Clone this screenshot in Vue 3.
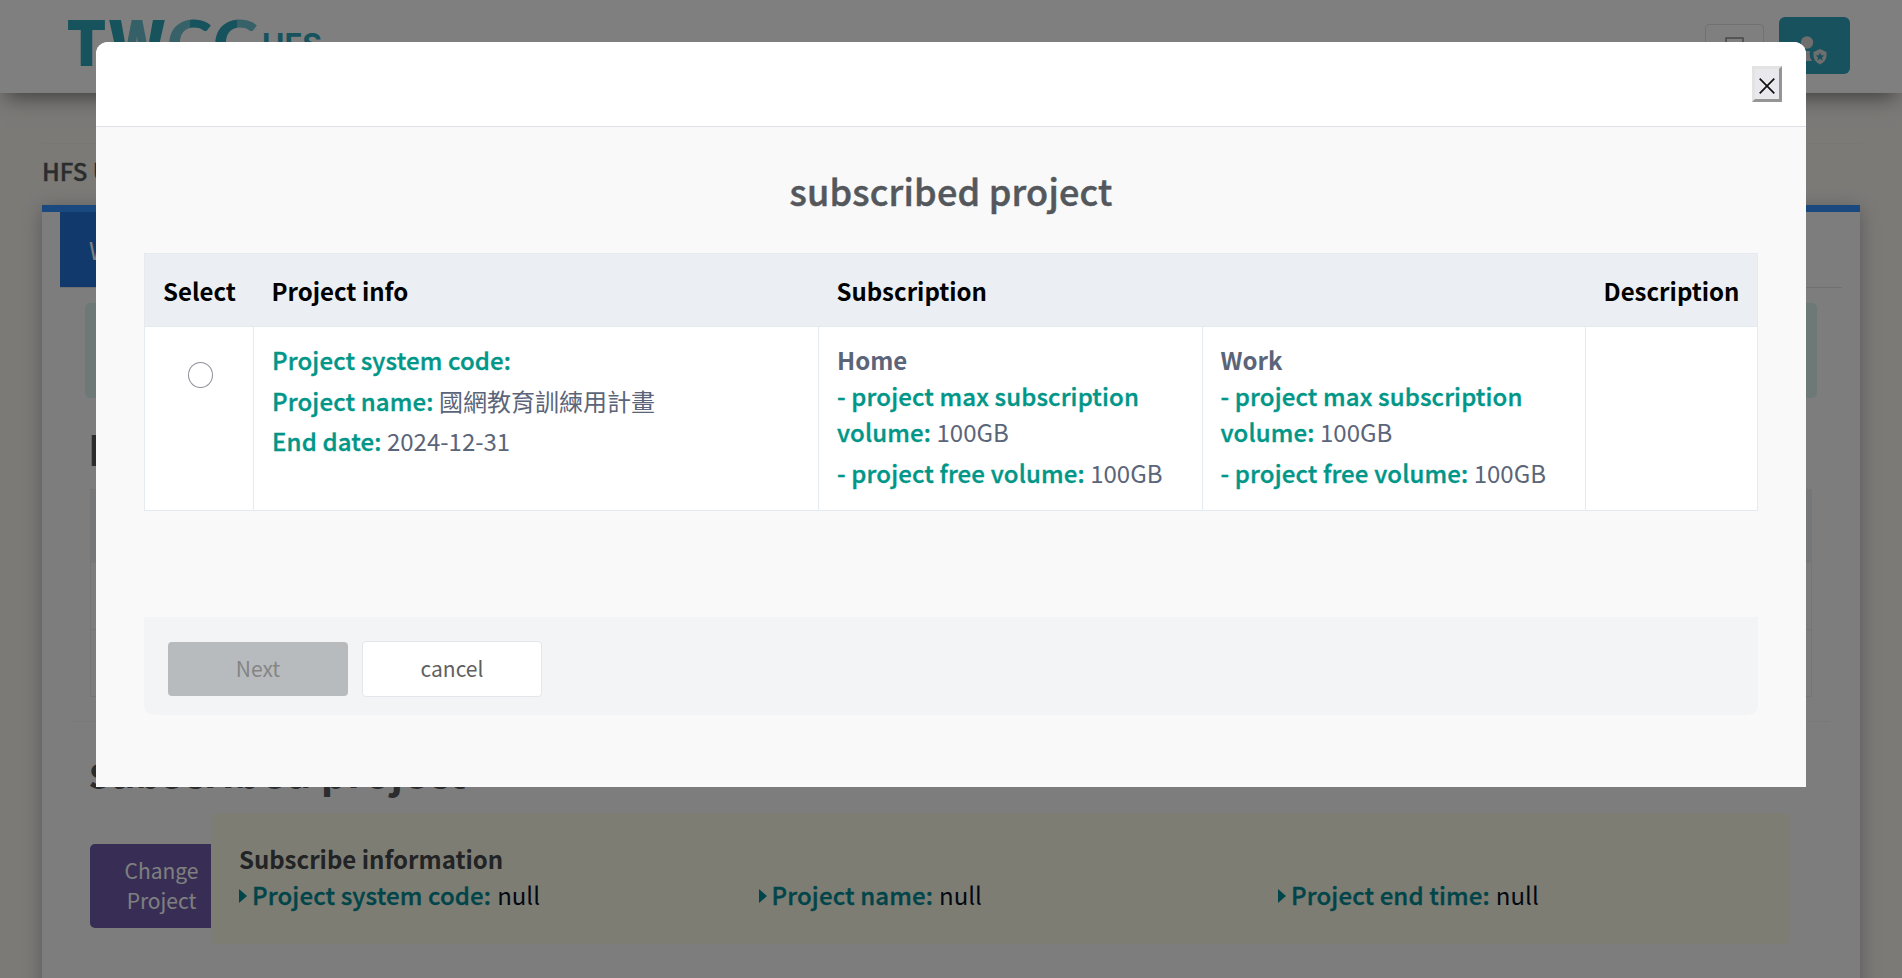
<script setup>
const volumes = ['Home', 'Work']
const info = ['Project system code:', 'Project name:', 'Project end time:']
</script>

<template>
  <div class="page">
    <header class="topbar">
      <svg class="logo" width="260" height="60" viewBox="0 0 260 60">
        <defs>
          <linearGradient id="c1"><stop offset=".5" stop-color="#2ca6ba" stop-opacity=".68" /><stop offset=".5" stop-color="#2ca6ba" /></linearGradient>
          <linearGradient id="c2"><stop offset=".53" stop-color="#2ca6ba" /><stop offset=".53" stop-color="#2ca6ba" stop-opacity=".68" /></linearGradient>
          <linearGradient id="w"><stop offset=".3" stop-color="#2ca6ba" /><stop offset=".3" stop-color="#2ca6ba" stop-opacity=".7" /><stop offset=".7" stop-color="#2ca6ba" stop-opacity=".7" /><stop offset=".7" stop-color="#2ca6ba" /></linearGradient>
        </defs>
        <g font-family="Inter, sans-serif" font-weight="900" font-size="63">
          <text x="-1.500" y="54" textLength="40" lengthAdjust="spacingAndGlyphs" fill="#2ca6ba">T</text>
          <text x="40" y="54" textLength="58" lengthAdjust="spacingAndGlyphs" fill="url(#w)">W</text>
          <g font-family="Lato, sans-serif">
            <text x="99" y="54" textLength="45" lengthAdjust="spacingAndGlyphs" fill="url(#c1)">C</text>
            <text x="145" y="54" textLength="45" lengthAdjust="spacingAndGlyphs" fill="url(#c2)">C</text>
          </g>
          <text x="194" y="43" font-size="30" font-weight="700" textLength="60" fill="#2ca6ba">HFS</text>
        </g>
      </svg>
      <div class="tools">
        <div class="tool">
          <svg width="20" height="26" viewBox="0 0 20 26"><rect x="1" y="1" width="17" height="24" fill="none" stroke="#888" stroke-width="1.4" /></svg>
        </div>
        <div class="account">
          <svg width="71" height="57" viewBox="0 0 71 57" fill="#ddd">
            <circle cx="28" cy="25.500" r="6.200" />
            <path d="M17 44v-4q0-6 6-6h8q-1 6 2 10z" />
            <path d="M41 32l6.500 3v4q0 5-6.500 8.500q-6.500-3.500-6.500-8.500v-4z" />
            <path fill="#2ea4bc" d="M41 35.500l1.200 2.800 3 .2-2.300 2 .8 3-2.700-1.700-2.700 1.700.8-3-2.300-2 3-.2z" />
          </svg>
        </div>
      </div>
    </header>
    <main>
      <div class="rule"></div>
      <h3 class="crumb">HFS User</h3>
      <section class="card">
        <div class="tabs"><div class="tab">Web</div></div>
        <div class="alert"></div>
        <h1 class="first">HFS</h1>
        <div class="grid"><div class="ghead"></div><div class="grow"></div><div class="grow"></div></div>
        <div class="sep"></div>
        <h1 class="second">subscribed project</h1>
        <div class="project">
          <div class="change">Change<br />Project</div>
          <div class="panel">
            <div class="ptitle">Subscribe information</div>
            <div class="prow">
              <div v-for="label in info" :key="label" class="item">
                <svg width="8" height="14" viewBox="0 0 8 14"><path d="M0 0l8 7-8 7z" fill="#008a92" /></svg>
                <b>{{ label }}</b><span>null</span>
              </div>
            </div>
          </div>
        </div>
      </section>
    </main>
  </div>

  <div class="overlay">
    <div class="modal">
      <div class="mhead">
        <button class="close"><svg width="16" height="16" viewBox="0 0 16 16"><path d="M.7.700l14.600 14.600M15.300.7L.7 15.300" stroke="#111" stroke-width="1.700" /></svg></button>
      </div>
      <div class="mbody">
        <h2>subscribed project</h2>
        <table>
          <colgroup><col class="a" /><col class="b" /><col class="c" /><col class="c" /><col class="d" /></colgroup>
          <thead>
            <tr><th>Select</th><th>Project info</th><th colspan="2">Subscription</th><th>Description</th></tr>
          </thead>
          <tbody>
            <tr>
              <td><div class="radio"></div></td>
              <td>
                <p><b>Project system code:</b></p>
                <p><b>Project name:</b> 國網教育訓練用計畫</p>
                <p><b>End date:</b> 2024-12-31</p>
              </td>
              <td v-for="v in volumes" :key="v">
                <strong>{{ v }}</strong>
                <p><b>- project max subscription<br />volume:</b> 100GB</p>
                <p><b>- project free volume:</b> 100GB</p>
              </td>
              <td></td>
            </tr>
          </tbody>
        </table>
        <div class="actions">
          <button class="next" disabled>Next</button>
          <button class="cancel">cancel</button>
        </div>
      </div>
    </div>
  </div>
</template>

<style>
html, body { margin: 0; overflow: hidden; }
</style>

<style scoped>
* { box-sizing: border-box; }
.page, .overlay { font-family: "Noto Sans CJK TC", "Noto Sans", sans-serif; font-size: 24px; line-height: 36px; }
.page { height: 978px; overflow: hidden; background: #f6f4ef; display: flow-root; }
b { font-weight: 500; letter-spacing: .15px; -webkit-text-stroke: .35px currentColor; }
strong { font-weight: 700; }
h1, h2, h3, p { margin: 0; }
.topbar { height: 93px; background: #fff; box-shadow: 0 10px 20px -6px rgba(0, 0, 0, .5); display: flex; justify-content: space-between; padding: 12px 52px 0 68px; }
.logo { overflow: visible; }
.tools { display: flex; gap: 15px; }
.tool { width: 59px; height: 46px; margin-top: 12px; border: 1px solid #e2e2e2; border-radius: 4px; padding: 12px 0 0 19px; line-height: 0; }
.account { width: 71px; height: 57px; margin-top: 5px; border-radius: 6px; background: #2ea4bc; line-height: 0; }
main { padding: 50px 42px 0; }
.rule { height: 1px; background: #f0eee9; }
.crumb { margin-top: 9px; height: 52px; font-size: 24px; font-weight: 500; -webkit-text-stroke: .35px currentColor; color: #54585d; }
.card { height: 900px; border-top: 7px solid #3292ff; background: #fbfbfb; box-shadow: 0 4px 18px rgba(0, 0, 0, .28); display: flow-root; }
.tabs { margin: 0 18px; height: 76px; border-bottom: 1px solid #e0e0e0; }
.tab { width: 160px; height: 75px; background: #2273d6; color: #fff; font-weight: 400; padding: 20px 0 0 29px; }
.alert { height: 95px; margin: 15px 43px 0; border-radius: 5px; background: #d9f3ee; }
h1 { font-size: 41.2px; font-weight: 700; line-height: 60px; color: #54585d; }
.first { margin: 20px 0 0 46px; }
.grid { margin: 11px 48px 0; border: 1px solid #ececec; border-bottom: 0; }
.ghead { height: 73px; background: #eceef3; }
.grow { height: 67px; border-bottom: 1px solid #ececec; }
.sep { margin: 24px 30px 0; height: 1px; background: #f0f0f0; }
.second { margin: 18px 0 0 47px; }
.project { display: flex; align-items: flex-start; margin: 13px 70px 0 48px; }
.change { width: 121px; height: 84px; margin-top: 31px; padding: 11px 11px 0 33px; background: #6e5baa; border-radius: 5px 0 0 5px; color: #fff; text-align: center; font-size: 21px; line-height: 30px; }
.panel { flex: 1; min-width: 0; height: 131px; padding: 28px 0 0 28px; border-radius: 5px; background: #fcfae8; }
.ptitle { font-weight: 700; color: #44474a; }
.prow { display: grid; grid-template-columns: 519.5px 519.5px 1fr; }
.item { display: flex; align-items: center; color: #041028; }
.item svg { margin-top: 2px; }
.item b { color: #008a92; margin: 0 6px 0 5px; }
.overlay { position: fixed; inset: 0; background: rgba(0, 0, 0, .5); padding: 42px 96px 0; }
.modal { height: 745px; border-radius: 12px 12px 0 0; background: #f9f9f9; overflow: hidden; }
.mhead { height: 85px; background: #fff; border-bottom: 1px solid #dee0e6; display: flex; justify-content: flex-end; padding: 24px 24px 0; }
.close { width: 30px; height: 36px; padding: 4px 0 0; border: 3px solid; border-color: #e3e3e3 #959595 #959595 #e3e3e3; background: #e9e9ed; display: flex; align-items: center; justify-content: center; }
.mbody { padding: 33px 48px 0; }
h2 { height: 93px; font-size: 36px; line-height: 60px; font-weight: 500; letter-spacing: .2px; -webkit-text-stroke: .5px currentColor; color: #54585d; text-align: center; }
table { width: 1613px; table-layout: fixed; border-collapse: collapse; background: #fff; border: 1px solid #e5eaef; }
.a { width: 109px; } .b { width: 565px; } .c { width: 383.5px; } .d { width: 172px; }
th { height: 73px; padding: 2px 18px 0; background: #ebeff3; text-align: left; font-weight: 700; color: #000; white-space: nowrap; }
td { height: 184px; padding: 15px 18px 0; vertical-align: top; border: 1px solid #e5eaef; color: #5b6579; }
td b { color: #009688; }
td p { margin-bottom: 4.500px; white-space: nowrap; }
td strong { display: block; }
.radio { width: 25px; height: 26px; margin: 20px 0 0 25px; border: 1px solid #8f8f9d; border-radius: 50%; background: #fff; }
.actions { display: flex; align-items: center; gap: 14px; height: 98px; margin-top: 106px; padding: 6px 24px 0; border-radius: 0 0 10px 10px; background: #f3f4f6; }
.next, .cancel { width: 180px; height: 54px; padding: 0 0 2px; border: 0; border-radius: 4px; background: #b7bbbd; color: #858585; font-family: inherit; font-size: 21px; line-height: 32px; }
.cancel { height: 56px; border: 1px solid #e3e6ea; background: #fff; color: #606060; }
</style>
